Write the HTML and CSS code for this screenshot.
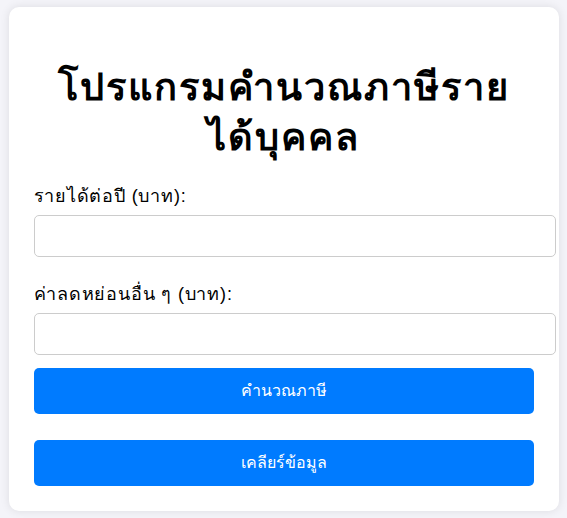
FILE: index.html
```html
<!DOCTYPE html>
<html lang="th">

<head>
    <meta charset="UTF-8" />
    <meta name="viewport" content="width=device-width, initial-scale=1.0" />
    <title>โปรแกรมคำนวณภาษีรายได้บุคคล</title>
    <link rel="stylesheet" href="styles.css">
</head>

<body>
    <div class="container">
        <h1 class="title">โปรแกรมคำนวณภาษีราย<br>ได้บุคคล</h1>

        <div class="field">
            <label for="income">รายได้ต่อปี (บาท):</label>
            <input type="number" id="income">
        </div>

        <div class="field">
            <label for="deduction">ค่าลดหย่อนอื่น ๆ (บาท):</label>
            <input type="number" id="deduction">
        </div>

        <button class="btn" id="calc">คำนวณภาษี</button>
        <button class="btn" id="clear">เคลียร์ข้อมูล</button>

        <div class="result" id="result"></div>
    </div>
</body>

</html>
```

FILE: styles.css
```css
body {
    margin: 0;
    background: #f4f4f9;
    display: flex;
    justify-content: center;
    align-items: center;
    height: 100vh;
    font-family: Arial, "Liberation Sans", "Noto Sans", sans-serif;
}

.container {
    width: 500px;
    padding: 25px;
    background: #fff;
    border-radius: 10px;
    box-shadow: 0 0 10px rgba(0, 0, 0, 0.1);
}

.title {
    text-align: center;
    font-size: 38px;
    line-height: 50px;
    letter-spacing: 2px;
    margin: 30px 0 23px;
    color: #000;
}

.field + .field {
    margin-top: 26px;
}

label {
    display: block;
    font-size: 18px;
    line-height: 22px;
    letter-spacing: 0.8px;
    margin-bottom: 8px;
}

input {
    display: block;
    width: 100%;
    padding: 10px;
    font-size: 16px;
    line-height: 20px;
    border: 1px solid #ccc;
    border-radius: 5px;
    margin: 0;
}

.btn {
    display: block;
    width: 100%;
    padding: 12px;
    font-size: 16px;
    line-height: 22px;
    font-family: inherit;
    color: #fff;
    background: #007bff;
    border: none;
    border-radius: 5px;
    margin-top: 13px;
}

.btn + .btn {
    margin-top: 26px;
}
```
